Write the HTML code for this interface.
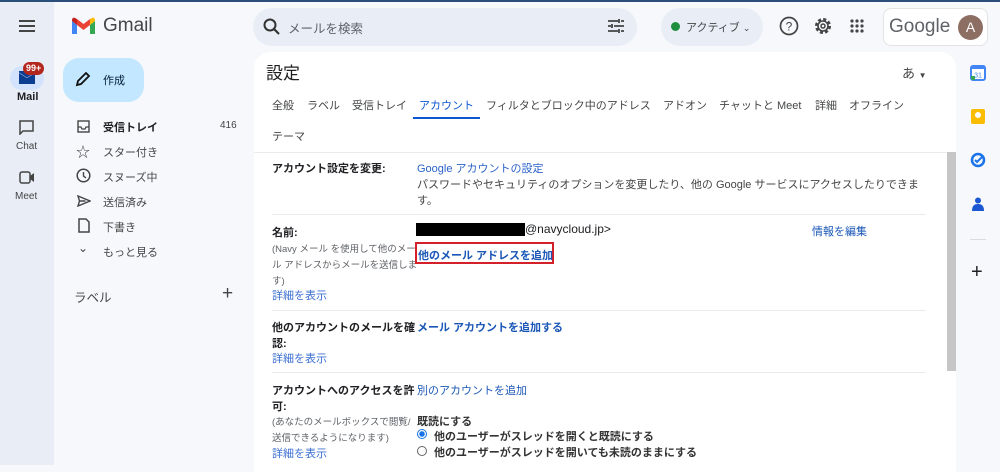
<!DOCTYPE html>
<html><head><meta charset="utf-8"><style>
*{margin:0;padding:0;box-sizing:border-box}
body{width:1000px;height:465px;overflow:hidden;background:#f6f8fc;font-family:"Liberation Sans","Noto Sans CJK JP",sans-serif;color:#202124;position:relative}
.a{position:absolute;white-space:nowrap}
.t13{font-size:11px}
.g{color:#444746}
.b{font-weight:bold}
.sm{font-size:9.5px;color:#5f6368}
.hr{position:absolute;left:272px;width:654px;height:1px;background:#e8eaed}
</style></head><body>
<div class="a" style="left:0;top:0;width:1000px;height:2px;background:#2b4f7a"></div>
<div class="a" style="left:0;top:2px;width:54px;height:463px;background:#e9eef6"></div>
<div class="a" style="left:19px;top:20px;width:16px;height:2px;background:#444;box-shadow:0 5px 0 #444,0 10px 0 #444"></div>
<svg class="a" style="left:71px;top:17px" width="25" height="19" viewBox="0 0 25 19"><path d="M1 4v13h5V8z" fill="#4285f4"/><path d="M19 8v9h5V4z" fill="#34a853"/><path d="M19 2v6l5-4V3c0-2-2-3-3-2z" fill="#fbbc04"/><path d="M6 8V2l6.5 5L19 2v6l-6.5 5z" fill="#ea4335"/><path d="M1 3v1l5 4V2L4 1C3 0 1 1 1 3z" fill="#c5221f"/></svg>
<div class="a" style="left:103px;top:15px;font-size:19px;color:#444746">Gmail</div>
<div class="a" style="left:253px;top:8px;width:384px;height:38px;border-radius:19px;background:#e9eef6"></div>
<svg class="a" style="left:262px;top:17px" width="20" height="20" viewBox="0 0 20 20"><circle cx="8" cy="8" r="5.5" fill="none" stroke="#333" stroke-width="2"/><path d="M12 12l5 5" stroke="#333" stroke-width="2.2"/></svg>
<div class="a" style="left:288px;top:18px;font-size:12.5px;color:#5f6368">メールを検索</div>
<svg class="a" style="left:607px;top:18px" width="18" height="16" viewBox="0 0 18 16"><path d="M1 3h10M14 3h3M1 8h3M7 8h10M1 13h10M14 13h3M12 1v4M5 6v4M12 11v4" stroke="#444" stroke-width="1.8"/></svg>
<div class="a" style="left:661px;top:8px;width:102px;height:38px;border-radius:19px;background:#e9eef6"></div>
<div class="a" style="left:671px;top:22px;width:9px;height:9px;border-radius:50%;background:#1e8e3e"></div>
<div class="a" style="left:686px;top:19px;font-size:11px;color:#444746">アクティブ <span style="font-size:9px">⌄</span></div>
<svg class="a" style="left:779px;top:16px" width="20" height="20" viewBox="0 0 20 20"><circle cx="10" cy="10" r="8.5" fill="none" stroke="#444" stroke-width="1.7"/><text x="10" y="14.5" font-size="12" text-anchor="middle" fill="#444" font-family="Liberation Sans">?</text></svg>
<svg class="a" style="left:813px;top:16px" width="20" height="20" viewBox="0 0 20 20"><circle cx="10" cy="10" r="6.5" fill="none" stroke="#444" stroke-width="3" stroke-dasharray="3 2.1"/><circle cx="10" cy="10" r="5" fill="none" stroke="#444" stroke-width="1.6"/><circle cx="10" cy="10" r="2" fill="none" stroke="#444" stroke-width="1.5"/></svg>
<svg class="a" style="left:850px;top:19px" width="14" height="14"><g fill="#444"><circle cx="2" cy="2" r="1.6"/><circle cx="7" cy="2" r="1.6"/><circle cx="12" cy="2" r="1.6"/><circle cx="2" cy="7" r="1.6"/><circle cx="7" cy="7" r="1.6"/><circle cx="12" cy="7" r="1.6"/><circle cx="2" cy="12" r="1.6"/><circle cx="7" cy="12" r="1.6"/><circle cx="12" cy="12" r="1.6"/></g></svg>
<div class="a" style="left:883px;top:8px;width:105px;height:38px;border-radius:8px;background:#fff;border:1px solid #e3e3e3"></div>
<div class="a" style="left:889px;top:16px;font-size:19px;color:#5f6368">Google</div>
<div class="a" style="left:958px;top:15px;width:25px;height:25px;border-radius:50%;background:#8d6e63;color:#fff;font-size:14px;text-align:center;line-height:25px">A</div>
<div class="a" style="left:10px;top:66px;width:34px;height:24px;border-radius:12px;background:#d3e3fd"></div>
<svg class="a" style="left:19px;top:71px" width="16" height="13"><path d="M0 2l8 5 8-5v11H0z" fill="#0b3d91"/><path d="M0 0h16v1.5l-8 5-8-5z" fill="#0b3d91"/></svg>
<div class="a" style="left:23px;top:62px;height:13px;padding:0 3px;border-radius:7px;background:#b3261e;color:#fff;font-size:9px;font-weight:bold;line-height:13px">99+</div>
<div class="a b" style="left:17px;top:91px;font-size:11px;color:#202124">Mail</div>
<svg class="a" style="left:19px;top:120px" width="15" height="15"><path d="M1 1h13v10H4l-3 3z" fill="none" stroke="#444" stroke-width="1.5"/></svg>
<div class="a" style="left:16px;top:141px;font-size:10px;color:#444">Chat</div>
<svg class="a" style="left:19px;top:171px" width="16" height="13"><rect x="1" y="1" width="10" height="11" rx="2" fill="none" stroke="#444" stroke-width="1.5"/><path d="M11 5l4-3v9l-4-3z" fill="#444"/></svg>
<div class="a" style="left:15px;top:191px;font-size:10px;color:#444">Meet</div>
<div class="a" style="left:63px;top:58px;width:81px;height:44px;border-radius:16px;background:#c2e7ff"></div>
<svg class="a" style="left:75px;top:71px" width="16" height="16"><path d="M2 14l1-4 8-8 3 3-8 8z" fill="none" stroke="#111" stroke-width="1.8"/></svg>
<div class="a" style="left:103px;top:72px;font-size:11px;color:#001d35">作成</div>
<svg class="a" style="left:77px;top:120px" width="13" height="13"><rect x="1" y="1" width="11" height="11" fill="none" stroke="#444" stroke-width="1.4"/><path d="M1 7h3l1 2h3l1-2h3" fill="none" stroke="#444" stroke-width="1.3"/></svg>
<div class="a b t13" style="left:103px;top:119px">受信トレイ</div>
<div class="a" style="left:220px;top:120px;font-size:10px;color:#444">416</div>
<div class="a" style="left:76px;top:142px;font-size:14px;color:#444">☆</div>
<div class="a t13 g" style="left:103px;top:144px">スター付き</div>
<svg class="a" style="left:76px;top:168px" width="15" height="15"><circle cx="7.5" cy="7.5" r="6.3" fill="none" stroke="#444" stroke-width="1.5"/><path d="M7.5 4v4l2.5 2" fill="none" stroke="#444" stroke-width="1.4"/></svg>
<div class="a t13 g" style="left:103px;top:169px">スヌーズ中</div>
<svg class="a" style="left:77px;top:195px" width="14" height="12"><path d="M1 1l12 5-12 5 1.5-5z M2.5 6h6" fill="none" stroke="#444" stroke-width="1.4"/></svg>
<div class="a t13 g" style="left:103px;top:194px">送信済み</div>
<svg class="a" style="left:78px;top:218px" width="12" height="15"><path d="M1 1h7l3 3v10H1z" fill="none" stroke="#444" stroke-width="1.5"/></svg>
<div class="a t13 g" style="left:103px;top:219px">下書き</div>
<div class="a" style="left:78px;top:241px;font-size:12px;color:#444">⌄</div>
<div class="a t13 g" style="left:103px;top:244px">もっと見る</div>
<div class="a" style="left:74px;top:287px;font-size:12.5px;color:#444">ラベル</div>
<div class="a" style="left:222px;top:283px;font-size:19px;color:#444">+</div>
<div class="a" style="left:254px;top:52px;width:702px;height:420px;background:#fff;border-radius:16px 16px 0 0"></div>
<div class="a" style="left:266px;top:59px;font-size:17px;color:#1f1f1f">設定</div>
<div class="a" style="left:902px;top:63px;font-size:13px;color:#444">あ <span style="font-size:8px">▼</span></div>
<div class="a t13 g" style="left:272px;top:97px">全般</div>
<div class="a t13 g" style="left:307px;top:97px">ラベル</div>
<div class="a t13 g" style="left:352px;top:97px">受信トレイ</div>
<div class="a t13" style="left:419px;top:97px;color:#0b57d0">アカウント</div>
<div class="a" style="left:413px;top:117px;width:67px;height:2px;background:#0b57d0"></div>
<div class="a t13 g" style="left:486px;top:97px">フィルタとブロック中のアドレス</div>
<div class="a t13 g" style="left:663px;top:97px">アドオン</div>
<div class="a t13 g" style="left:719px;top:97px">チャットと Meet</div>
<div class="a t13 g" style="left:815px;top:97px">詳細</div>
<div class="a t13 g" style="left:849px;top:97px">オフライン</div>
<div class="a t13 g" style="left:272px;top:128px">テーマ</div>
<div class="a" style="left:254px;top:152px;width:694px;height:1px;background:#e8eaed"></div>
<div class="a" style="left:947px;top:152px;width:9px;height:219px;background:#c6c6c6"></div>
<div class="a b" style="left:272px;top:160px;font-size:11px">アカウント設定を変更:</div>
<div class="a" style="left:417px;top:160px;font-size:11px;color:#2a62c9">Google アカウントの設定</div>
<div class="a" style="left:417px;top:176px;font-size:11px;color:#444">パスワードやセキュリティのオプションを変更したり、他の Google サービスにアクセスしたりできま</div>
<div class="a" style="left:417px;top:192px;font-size:11px;color:#444">す。</div>
<div class="hr" style="top:214px"></div>
<div class="a b" style="left:272px;top:224px;font-size:11px">名前:</div>
<div class="a" style="left:416px;top:223px;width:109px;height:13px;background:#000"></div>
<div class="a" style="left:525px;top:222px;font-size:12px">@navycloud.jp&gt;</div>
<div class="a" style="left:812px;top:223px;font-size:11px;color:#1a57b6">情報を編集</div>
<div class="a sm" style="left:272px;top:241px">(Navy メール を使用して他のメー</div>
<div class="a sm" style="left:272px;top:257px">ル アドレスからメールを送信しま</div>
<div class="a sm" style="left:272px;top:273px">す)</div>
<div class="a" style="left:415px;top:242px;width:139px;height:22px;border:2px solid #d4202a"></div>
<div class="a b" style="left:418px;top:247px;font-size:11px;color:#1a57b6">他のメール アドレスを追加</div>
<div class="a" style="left:272px;top:287px;font-size:11px;color:#3b6fd1">詳細を表示</div>
<div class="hr" style="top:310px"></div>
<div class="a b" style="left:272px;top:319px;font-size:11px">他のアカウントのメールを確</div>
<div class="a b" style="left:272px;top:335px;font-size:11px">認:</div>
<div class="a b" style="left:417px;top:319px;font-size:11px;color:#1a57b6">メール アカウントを追加する</div>
<div class="a" style="left:272px;top:350px;font-size:11px;color:#3b6fd1">詳細を表示</div>
<div class="hr" style="top:372px"></div>
<div class="a b" style="left:272px;top:382px;font-size:11px">アカウントへのアクセスを許</div>
<div class="a b" style="left:272px;top:398px;font-size:11px">可:</div>
<div class="a" style="left:417px;top:382px;font-size:11px;color:#1a57b6">別のアカウントを追加</div>
<div class="a sm" style="left:272px;top:414px;font-size:9.5px">(あなたのメールボックスで閲覧/</div>
<div class="a sm" style="left:272px;top:430px;font-size:9.5px">送信できるようになります)</div>
<div class="a" style="left:272px;top:445px;font-size:11px;color:#3b6fd1">詳細を表示</div>
<div class="a b" style="left:417px;top:413px;font-size:11px;color:#333">既読にする</div>
<div class="a" style="left:417px;top:429px;width:10px;height:10px;border-radius:50%;border:1px solid #1a73e8;background:radial-gradient(#1a73e8 2.5px,#fff 3px)"></div>
<div class="a b" style="left:434px;top:428px;font-size:11px;color:#333">他のユーザーがスレッドを開くと既読にする</div>
<div class="a" style="left:417px;top:446px;width:10px;height:10px;border-radius:50%;border:1px solid #666;background:#fff"></div>
<div class="a b" style="left:434px;top:444px;font-size:11px;color:#333">他のユーザーがスレッドを開いても未読のままにする</div>
<svg class="a" style="left:970px;top:65px" width="16" height="16"><rect x="1" y="1" width="14" height="14" rx="2" fill="#fff" stroke="#4285f4" stroke-width="2"/><path d="M1 11v2a2 2 0 0 0 2 2h2v-4z" fill="#34a853"/><rect x="1" y="1" width="14" height="3" fill="#4285f4"/><text x="8" y="12.5" font-size="7" text-anchor="middle" fill="#4285f4" font-family="Liberation Sans">31</text></svg>
<div class="a" style="left:971px;top:109px;width:14px;height:15px;border-radius:2px;background:#fbbc04"></div>
<div class="a" style="left:975px;top:112px;width:6px;height:6px;border-radius:50%;background:#fff"></div>
<svg class="a" style="left:970px;top:152px" width="16" height="16"><circle cx="8" cy="8" r="6" fill="none" stroke="#1a73e8" stroke-width="2.5"/><path d="M5 8l2 2 5-5" fill="none" stroke="#1a73e8" stroke-width="2"/></svg>
<svg class="a" style="left:972px;top:197px" width="12" height="14"><circle cx="6" cy="3.5" r="3" fill="#1a57d0"/><path d="M0 14c0-5 2-7 6-7s6 2 6 7z" fill="#1a57d0"/></svg>
<div class="a" style="left:970px;top:239px;width:16px;height:1px;background:#dadce0"></div>
<div class="a" style="left:971px;top:261px;font-size:20px;color:#222">+</div>
</body></html>
